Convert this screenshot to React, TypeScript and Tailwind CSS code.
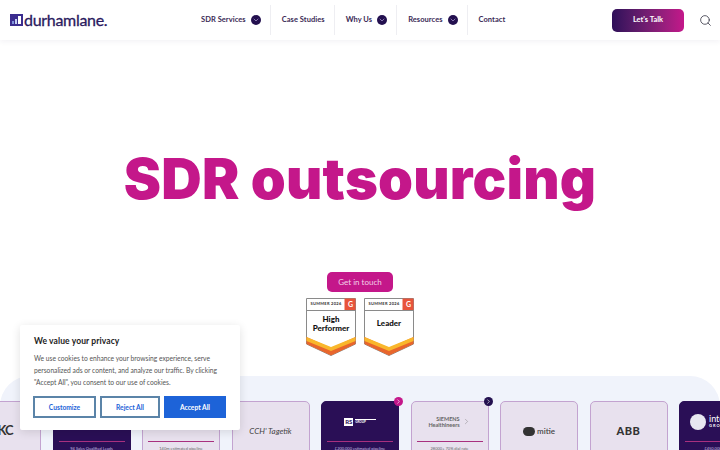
import { ChevronDown, ChevronRight, Search } from "lucide-react";
import type { ReactNode } from "react";

const navItems = [
  { label: "SDR Services", menu: true },
  { label: "Case Studies", menu: false },
  { label: "Why Us", menu: true },
  { label: "Resources", menu: true },
  { label: "Contact", menu: false },
];

function Logo() {
  return (
    <a className="flex w-[97px] items-center gap-px">
      <span className="flex h-[12px] w-[13px] shrink-0 items-end gap-px bg-[#3b2d8f] px-[2px] pb-[2px]">
        <span className="h-[3px] w-[2px] bg-[#7f93dc]" />
        <span className="h-[5px] w-[2px] bg-[#c3cff2]" />
        <span className="h-[8px] w-[3px] bg-white" />
      </span>
      <span className="text-[16px] leading-none font-normal tracking-[-0.3px] text-[#2a1a5e] [-webkit-text-stroke:0.3px_#2a1a5e]">
        durhamlane.
      </span>
    </a>
  );
}

function Navbar() {
  return (
    <header className="relative z-10 flex h-10 w-full items-center bg-white pr-[8px] pl-[10px] shadow-[0_1px_6px_rgba(40,30,90,0.07)]">
      <Logo />
      <nav className="ml-[94px] flex h-full items-center">
        {navItems.map((item, i) => (
          <div
            key={item.label}
            className={`flex h-[30px] items-center gap-[5px] text-[7.5px] font-bold tracking-[0.05px] text-[#3a2a56] ${
              i < navItems.length - 1 ? "border-r border-[#eeeef2] pr-[9px]" : ""
            } ${i > 0 ? "pl-[11px]" : ""}`}
          >
            <span>{item.label}</span>
            {item.menu && (
              <span className="flex h-[10px] w-[10px] items-center justify-center rounded-full bg-[#23104f]">
                <ChevronDown size={8} strokeWidth={2} className="text-[#b9a9e0]" />
              </span>
            )}
          </div>
        ))}
      </nav>
      <button className="ml-auto flex h-[23px] w-[72px] items-center justify-center rounded-[5px] bg-gradient-to-r from-[#2f0f59] to-[#c4178a] text-[7.5px] font-bold text-white">
        Let's Talk
      </button>
      <Search size={13} strokeWidth={1.4} className="ml-[15px] text-[#2a2a3a]" />
    </header>
  );
}

function Badge({ children }: { children: ReactNode }) {
  return (
    <div className="relative h-[58px] w-[50px]">
      <svg viewBox="0 0 50 58" className="absolute inset-0 h-full w-full">
        <path d="M0.5 0.5 H49.5 V46 L25 57.5 L0.5 46Z" fill="#fff" stroke="#8a8a8a" />
        <path d="M0.5 39 L25 50 L49.5 39 V46 L25 57.5 L0.5 46Z" fill="#e8662c" />
        <path d="M0.5 39 L25 49 L49.5 39 V43 L25 53 L0.5 43Z" fill="#f9b72c" />
        <path d="M38.5 0.5 H49.5 V12 H38.5Z" fill="#e8543b" />
        <path d="M0.5 12.5 H49.5" stroke="#8a8a8a" />
      </svg>
      <div className="relative flex h-[12px] items-stretch">
        <span className="flex-1 pl-px text-center text-[4px] leading-[12px] font-bold tracking-[0.3px] text-[#333]">SUMMER 2026</span>
        <span className="flex w-[11px] items-center justify-center text-[7px] leading-none font-bold text-white">G</span>
      </div>
      <div className="relative flex h-[27px] items-center justify-center text-center text-[8px] leading-[9px] font-black text-[#111]">
        {children}
      </div>
    </div>
  );
}

type CardProps = {
  dark?: boolean;
  children?: ReactNode;
  stat?: string;
  tag?: "pink" | "navy";
};

function Card({ dark, children, stat, tag }: CardProps) {
  return (
    <div
      className={`relative flex h-[80px] w-[78px] shrink-0 flex-col rounded-[5px] border ${
        dark ? "border-[#2a0f56] bg-[#2a0f56]" : "border-[#c3a3d0] bg-[#e8e1ee]"
      }`}
    >
      <div className={`flex items-center justify-center ${stat ? "h-[39px]" : "h-[58px]"} ${dark ? "text-white" : "text-[#444]"}`}>
        {children}
      </div>
      {stat && (
        <>
          <div className="mx-[5px] h-px bg-[#a8307f]" />
          <p className={`mt-[4px] text-center text-[4px] leading-[5px] ${dark ? "text-[#c9bfe0]" : "text-[#666]"}`}>{stat}</p>
        </>
      )}
      {tag && (
        <span
          className={`absolute -top-[5px] -right-[5px] flex h-[9px] w-[9px] items-center justify-center rounded-full ${
            tag === "pink" ? "bg-[#c4178a]" : "bg-[#23104f]"
          }`}
        >
          <ChevronRight size={7} strokeWidth={2} className="text-white" />
        </span>
      )}
    </div>
  );
}

function Carousel() {
  return (
    <section className="mt-[20px] w-full rounded-t-[30px] bg-[#f0f3fb] pt-[25px]">
      <div className="ml-[-37px] flex h-[49px] gap-[11.5px] overflow-visible">
        <Card>
          <span className="pl-[6px] text-[13px] font-bold tracking-[-1px] text-[#333]">KC</span>
        </Card>
        <Card dark stat="94 Sales Qualified Leads" />
        <Card stat="140m estimated pipeline" />
        <Card>
          <span className="text-[8px] italic">CCH' Tagetik</span>
        </Card>
        <Card dark stat="£200,000 estimated pipeline" tag="pink">
          <span className="flex items-center gap-[2px]">
            <span className="bg-white px-[1px] text-[6px] leading-[8px] font-bold text-[#2a0f56]">RS</span>
            <span className="border-t border-white pr-[10px] text-[3px] font-bold">GROUP</span>
          </span>
        </Card>
        <Card stat="28000+ 70% dial rate" tag="navy">
          <span className="flex items-center gap-[2px] text-[#666]">
            <span className="text-right text-[5.5px] leading-[6px] font-bold">
              SIEMENS
              <br />
              Healthineers
            </span>
            <ChevronRight size={9} strokeWidth={1} />
          </span>
        </Card>
        <Card>
          <span className="flex items-center gap-[2px]">
            <span className="h-[9px] w-[12px] rounded-full bg-[#333]" />
            <span className="text-[8px] font-semibold">mitie</span>
          </span>
        </Card>
        <Card>
          <span className="text-[11px] font-black tracking-[0.5px] text-[#333]">ABB</span>
        </Card>
        <Card dark stat="£450,000 deals">
          <span className="flex w-full items-center gap-[3px] pl-[10px]">
            <span className="h-[16px] w-[16px] shrink-0 rounded-full bg-[#e8e8f0]" />
            <span className="text-[9px] leading-[8px]">
              inter
              <br />
              <span className="block text-[4px] leading-[5px] font-bold tracking-[1px]">GROUP</span>
            </span>
          </span>
        </Card>
      </div>
    </section>
  );
}

function CookieBanner() {
  return (
    <div className="absolute bottom-[20px] left-[20px] z-20 h-[105px] w-[220px] rounded-[2px] bg-white px-[14px] pt-[11px] shadow-[0_2px_10px_rgba(0,0,0,0.12)]">
      <h2 className="text-[8.5px] leading-[11px] font-bold tracking-[0.1px] text-[#222]">We value your privacy</h2>
      <p className="mt-[5px] text-[6.7px] leading-[12px] text-[#555]">
        We use cookies to enhance your browsing experience, serve personalized ads or content, and analyze our traffic. By clicking "Accept All", you consent to our use of cookies.
      </p>
      <div className="mt-[8px] -ml-px flex gap-[4px]">
        <button className="h-[22px] w-[63px] border-2 border-[#5b84a8] text-[6.7px] font-bold text-[#1d63d8]">Customize</button>
        <button className="h-[22px] w-[60px] border-2 border-[#5b84a8] text-[6.7px] font-bold text-[#1d63d8]">Reject All</button>
        <button className="h-[22px] w-[62px] bg-[#1d63d8] text-[6.7px] font-bold text-white">Accept All</button>
      </div>
    </div>
  );
}

export default function App() {
  return (
    <div className="relative flex h-[450px] w-[720px] flex-col items-center overflow-hidden bg-white font-['Lato',sans-serif]">
      <Navbar />
      <h1 className="mt-[96px] font-['Inter',sans-serif] text-[56px] leading-[86px] font-black tracking-[0.2px] text-[#c4178a]">
        SDR outsourcing
      </h1>
      <button className="mt-[50px] flex h-[20px] w-[66px] items-center justify-center rounded-[5px] bg-[#c4178a] text-[8px] text-[#f3d0e8]">
        Get in touch
      </button>
      <div className="mt-[6px] flex gap-[8px]">
        <Badge>
          High
          <br />
          Performer
        </Badge>
        <Badge>Leader</Badge>
      </div>
      <Carousel />
      <CookieBanner />
    </div>
  );
}
